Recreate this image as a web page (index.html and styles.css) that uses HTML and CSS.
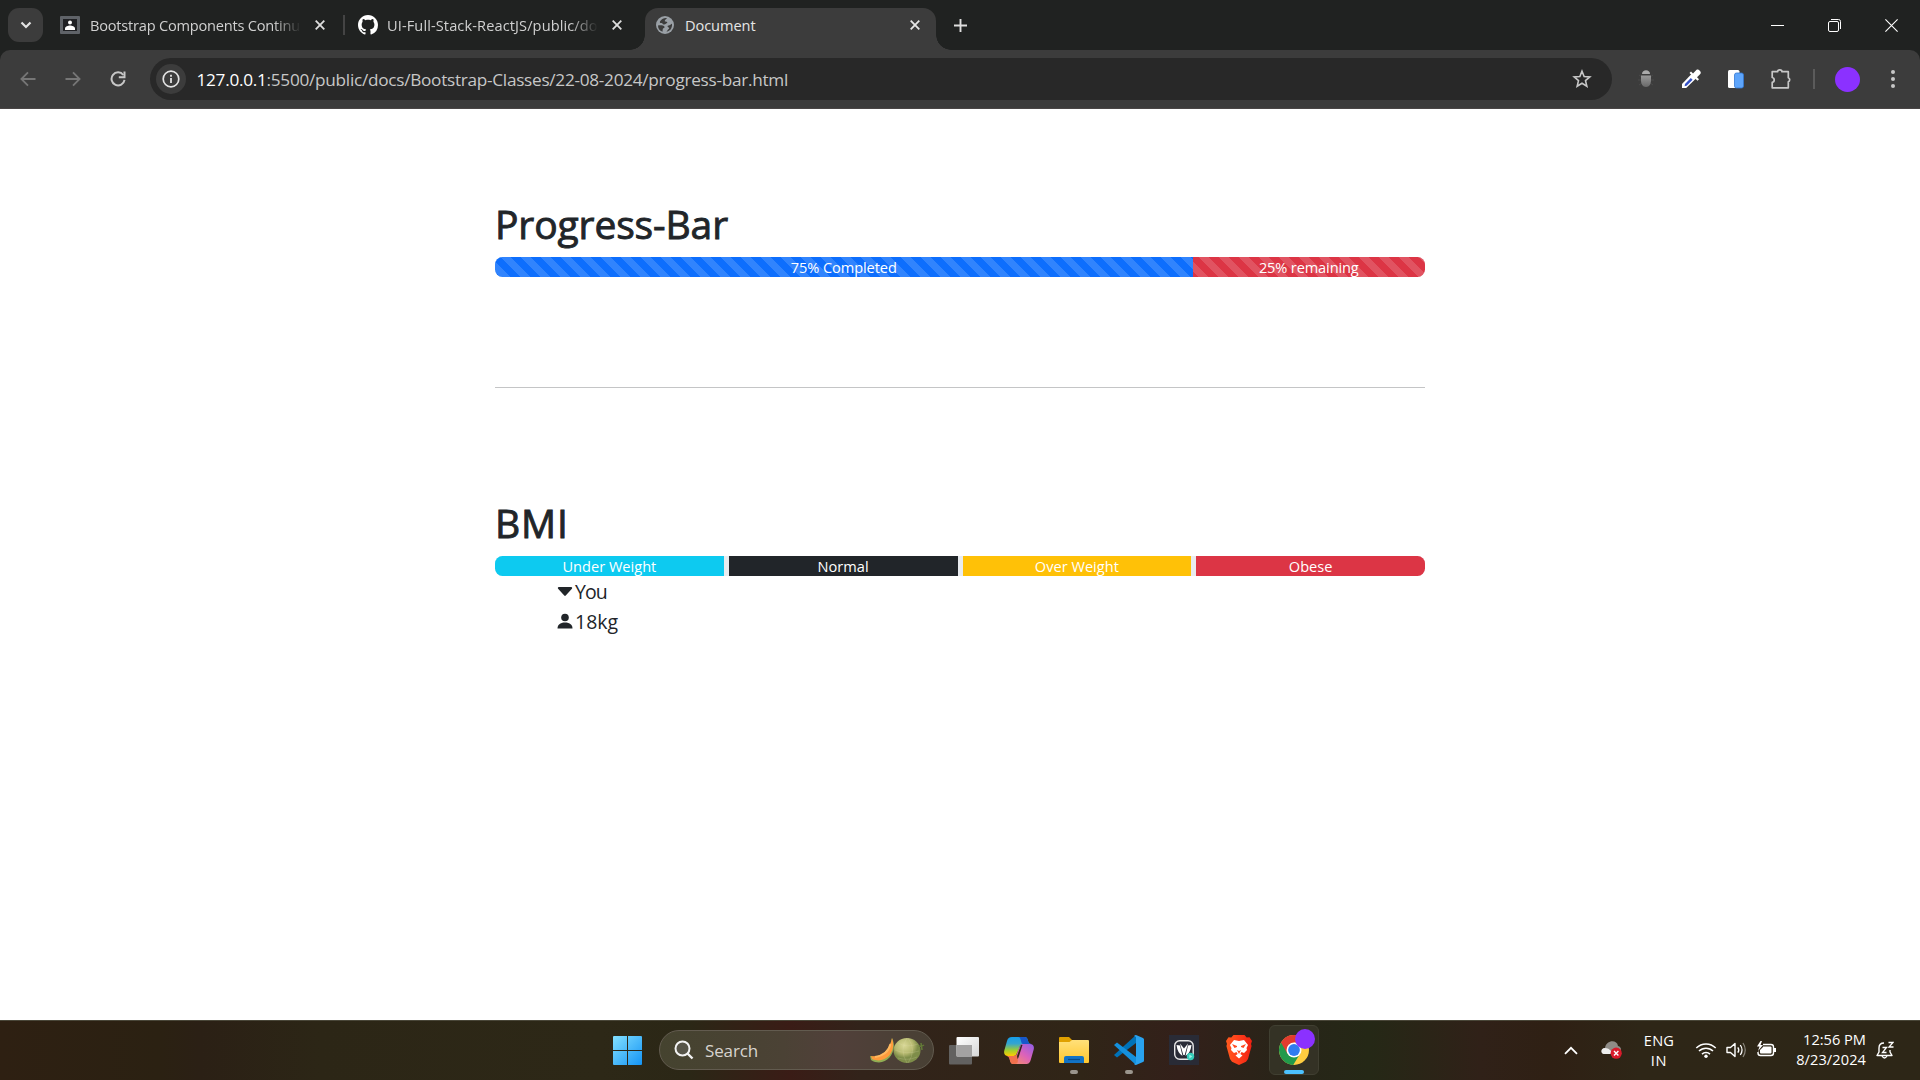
FILE: index.html
```html
<!DOCTYPE html>
<html lang="en">
<head>
<meta charset="utf-8">
<title>Document</title>
<link rel="stylesheet" href="styles.css">
</head>
<body>
<div class="screen">
  <header class="browser">
    <div class="tabstrip">
      <button class="tab-search"><svg width="12" height="8" viewBox="0 0 12 8"><path d="M1.5 1.5 6 6l4.500-4.500" fill="none" stroke="#e3e3e3" stroke-width="2.200"/></svg></button>
      <div class="tab tab-first">
        <svg class="favicon" width="20" height="18" viewBox="0 0 20 18"><rect width="20" height="18" rx="1" fill="#5f6368"/><rect x="3" y="3" width="14" height="12" fill="#202124"/><circle cx="10" cy="6.500" r="2" fill="#fff"/><path d="M5 14v-1.500C5 10.500 8 9.500 10 9.500s5 1 5 3V14z" fill="#fff"/></svg>
        <span class="tab-title faded"><span class="t-tab1">Bootstrap Components Continu</span></span>
        <svg class="tab-close" width="10" height="10" viewBox="0 0 10 10"><path d="m.7.7 8.600 8.600m0-8.600L.7 9.300" stroke="#dedede" stroke-width="1.800"/></svg>
      </div>
      <i class="tab-divider"></i>
      <div class="tab tab-second">
        <svg class="favicon" width="20" height="20" viewBox="0 0 16 16"><path fill="#fff" d="M8 0C3.580 0 0 3.580 0 8c0 3.540 2.290 6.530 5.470 7.590.4.070.55-.17.55-.38 0-.19-.01-.82-.01-1.490-2.010.37-2.530-.49-2.690-.94-.09-.23-.48-.94-.82-1.130-.28-.15-.68-.52-.01-.53.63-.01 1.080.58 1.230.82.72 1.210 1.870.87 2.330.66.070-.52.28-.87.51-1.070-1.780-.2-3.640-.89-3.640-3.950 0-.87.31-1.590.82-2.150-.08-.2-.36-1.020.08-2.120 0 0 .67-.21 2.200.82.64-.18 1.320-.27 2-.27s1.360.09 2 .27c1.530-1.040 2.200-.82 2.200-.82.44 1.100.16 1.920.08 2.120.51.56.82 1.270.82 2.150 0 3.070-1.870 3.750-3.650 3.950.29.25.54.73.54 1.480 0 1.070-.01 1.930-.01 2.200 0 .21.15.46.55.38A8.010 8.010 0 0 0 16 8c0-4.420-3.580-8-8-8"/></svg>
        <span class="tab-title faded"><span class="t-tab2">UI-Full-Stack-ReactJS/public/do</span></span>
        <svg class="tab-close" width="10" height="10" viewBox="0 0 10 10"><path d="m.7.7 8.600 8.600m0-8.600L.7 9.300" stroke="#dedede" stroke-width="1.800"/></svg>
      </div>
      <div class="tab tab-active">
        <svg class="favicon" width="18" height="18" viewBox="0 0 18 18"><circle cx="9" cy="9" r="9" fill="#9aa0a6"/><path d="M11 2.300c-1.800-.8-5 .4-6.700 2.600-.9 1.300-.4 2.200 1 2.100 1.500-.2 1.200 1.700 2.700 1.500 1.800-.3 2-1.500 3.300-1.500.2-1.500-1.300-1.500-2.300-1.600-.7-.3.300-2 2-3.100M2 9.500c2.500-.4 5.500-.2 6.500 1.300.6 1.400-1.700 1.300-1.800 2.600l-.2 2.300C3.600 15 2 12.500 2 9.500m14-1.800c-.9.200-1.500 1.500-2.600 1.500-1.300.1-2.200.5-1.700 1.500.5.900 1.600.3 1.500 1.500-.1 1-1.300 1-1.700 2-.3.700-.6 1.200-1.300 1.600 3.500-.3 6.300-3.600 5.800-8.100" fill="#3c3c3c"/></svg>
        <span class="tab-title"><span class="t-tab3">Document</span></span>
        <svg class="tab-close" width="10" height="10" viewBox="0 0 10 10"><path d="m.7.7 8.600 8.600m0-8.600L.7 9.300" stroke="#e6e6e6" stroke-width="1.800"/></svg>
      </div>
      <svg class="new-tab" width="13" height="13" viewBox="0 0 13 13"><path d="M6.500 0v13M0 6.500h13" stroke="#dedede" stroke-width="1.900"/></svg>
      <div class="window-buttons">
        <svg width="13" height="13" viewBox="0 0 13 13"><path d="M0 6.500h13" stroke="#fff"/></svg>
        <svg width="13" height="13" viewBox="0 0 13 13"><rect x=".5" y="2.500" width="10" height="10" rx="1.500" fill="none" stroke="#fff"/><path d="M3 .5h7.500a2 2 0 0 1 2 2V10" fill="none" stroke="#fff"/></svg>
        <svg width="13" height="13" viewBox="0 0 13 13"><path d="m.4.400 12.200 12.200m0-12.200L.4 12.600" stroke="#fff" stroke-width="1.100"/></svg>
      </div>
    </div>
    <div class="toolbar">
      <nav class="nav-buttons">
        <svg width="16" height="16" viewBox="0 0 16 16"><path d="M15.500 8H1.500M8 1.300 1.400 8 8 14.700" fill="none" stroke="#767676" stroke-width="1.800"/></svg>
        <svg width="16" height="16" viewBox="0 0 16 16"><path d="M.5 8h14M8 1.300 14.600 8 8 14.700" fill="none" stroke="#767676" stroke-width="1.800"/></svg>
        <svg width="16" height="16" viewBox="0 0 16 16"><path d="M13.300 4A6.500 6.500 0 1 0 14.500 8.800" fill="none" stroke="#c7c7c7" stroke-width="2"/><path d="M14.500.5v5.700H8.800" fill="none" stroke="#c7c7c7" stroke-width="2"/></svg>
      </nav>
      <div class="omnibox">
        <span class="site-info"><svg width="18" height="18" viewBox="0 0 18 18"><circle cx="9" cy="9" r="7.800" fill="none" stroke="#e3e3e3" stroke-width="1.700"/><path d="M9 8v5M9 4.800v1.900" stroke="#e3e3e3" stroke-width="1.800"/></svg></span>
        <span class="url"><b>127.0.0.1</b>:5500/public/docs/Bootstrap-Classes/22-08-2024/progress-bar.html</span>
        <svg class="star" width="20" height="20" viewBox="0 0 20 20"><path d="m10 2.200 2.150 5.300 5.700.45-4.350 3.700 1.350 5.600L10 14.200l-4.850 3.050 1.350-5.600-4.350-3.700 5.700-.45z" fill="none" stroke="#c7c7c7" stroke-width="1.600"/></svg>
      </div>
      <div class="extensions">
        <svg width="20" height="20" viewBox="0 0 20 20"><defs><linearGradient id="bug" x2="0" y2="1"><stop stop-color="#999"/><stop offset="1" stop-color="#686868"/></linearGradient></defs><path d="M3 6l3 2m11-2-3 2M2 11h3m13 0h-3M3 16l3-2m11 2-3-2" stroke="#4a4a4a"/><path d="M6 5c0-5 8-5 8 0z" fill="#aaa"/><path d="M5 6.500h10V11c0 4-1.500 7-5 7s-5-3-5-7z" fill="url(#bug)"/></svg>
        <svg width="22" height="22" viewBox="0 0 22 22"><path d="m11.500 6 4.500 4.500-9.800 9.600H2v-4.200z" fill="#fff"/><path d="m10.800 10 1.800 1.700-6 6-2 .5.400-2.200z" fill="#3452c8"/><path d="m9.500 5 8 7.800 1.500-1.500-2-2.100 3.500-3.500c1.300-1.700-2-5-3.900-3.900L13 5.400l-2-1.900z" fill="#fff"/></svg>
        <svg width="18" height="20" viewBox="0 0 18 20"><rect x="1" y="1" width="11.500" height="18" rx="1.500" fill="#fff"/><rect x="7.500" y="4" width="9" height="15" rx="2" fill="#5ea5fb" stroke="#3478d4" stroke-width=".8"/></svg>
        <svg width="22" height="22" viewBox="0 0 22 22"><path d="M2.200 3.700h5.400a2.200 1.900 0 0 1 4.400 0h6.300v6a2 2.200 0 0 1 0 4.200v5.900H2.200v-5.400a2.500 2.500 0 0 0 0-4.900z" fill="none" stroke="#c7c7c7" stroke-width="1.700" stroke-linejoin="round"/></svg>
      </div>
      <i class="toolbar-divider"></i>
      <span class="avatar"></span>
      <svg class="menu" width="4" height="18" viewBox="0 0 4 18"><g fill="#c7c7c7"><circle cx="2" cy="2" r="2"/><circle cx="2" cy="9" r="2"/><circle cx="2" cy="16" r="2"/></g></svg>
    </div>
  </header>

  <main class="page">
    <section class="completion">
      <h1 class="t-h1">Progress-Bar</h1>
      <div class="progress">
        <div class="bar striped primary" style="width:75%"><span class="t-75">75% Completed</span></div>
        <div class="bar striped danger" style="width:25%"><span class="t-25">25% remaining</span></div>
      </div>
    </section>
    <hr>
    <section>
      <h1 class="t-bmi">BMI</h1>
      <div class="progress bmi">
        <div class="bar info"><span>Under Weight</span></div>
        <div class="bar dark"><span>Normal</span></div>
        <div class="bar warning"><span>Over Weight</span></div>
        <div class="bar danger"><span>Obese</span></div>
      </div>
      <div class="reading"><svg width="16" height="16" viewBox="0 0 16 16"><path fill="#212529" d="M7.250 12.600 1.100 5.700C.5 5 1 4 1.800 4h12.400c.8 0 1.300 1 .7 1.700l-6.150 6.900a1 1 0 0 1-1.500 0"/></svg><span class="t-you">You</span></div>
      <div class="reading"><svg width="16" height="16" viewBox="0 0 16 16"><path fill="#212529" d="M.5 15.500c0-3.500 2.500-6 7.500-6s7.500 2.500 7.500 6z"/><circle cx="8" cy="4.500" r="3.800" fill="#212529"/></svg><span>18kg</span></div>
    </section>
  </main>

  <footer class="taskbar">
    <div class="slot start"><svg width="29" height="29" viewBox="0 0 29 29"><defs><linearGradient id="win" x1="0" y1="0" x2="1" y2="1" ><stop stop-color="#83e0ff"/><stop offset="1" stop-color="#1494f5"/></linearGradient></defs><path fill="url(#win)" d="M1 0h13v14H0V1q0-1 1-1m14 0h13q1 0 1 1v13H15zM0 15h14v14H1q-1 0-1-1zm15 0h14v13q0 1-1 1H15z"/></svg></div>
    <div class="search">
      <svg width="20" height="20" viewBox="0 0 20 20"><circle cx="8.500" cy="8.500" r="7" fill="#777" fill-opacity=".35" stroke="#f3f3f3" stroke-width="2"/><path d="m13.500 13.500 5 5" stroke="#f3f3f3" stroke-width="2.400"/></svg>
      <span class="t-search">Search</span>
      <svg class="melon" width="55" height="27" viewBox="0 0 55 27"><defs><radialGradient id="mel" cx=".4" cy=".3"><stop stop-color="#d9d896"/><stop offset=".65" stop-color="#b6b970"/><stop offset="1" stop-color="#7e8d49"/></radialGradient></defs><ellipse cx="37" cy="13.500" rx="13.500" ry="12.500" fill="url(#mel)"/><path d="M28 6q9 5 20 1M25 13q12 5 24 1M28 21q10 3 19-1M37 1q-8 12 0 25M38 1q9 12 0 25" fill="none" stroke="#e0deb0" stroke-opacity=".25" stroke-width=".8"/><path d="M49 9q2 1 5-1M51 6l1 7" fill="none" stroke="#637b37" stroke-width="1.500"/><path d="M22 1c7 14-7 31-21 22l-1-4C12 22 20 12 22 1" fill="#90ad54"/><path d="M22 1c5 13-6 27-20 21l-1-3C13 21 20 12 22 1" fill="#ff9b3c"/><path d="M20.500 7Q18 18 5 20" fill="none" stroke="#ffb85f" stroke-width="2"/></svg>
    </div>
    <div class="apps">
      <div class="slot"><svg width="30" height="29" viewBox="0 0 30 29"><defs><linearGradient id="tv" x2="1" y2="1"><stop stop-color="#fff"/><stop offset="1" stop-color="#d6d6d6"/></linearGradient></defs><rect y="9" width="23" height="19.500" rx="1" fill="#626160"/><rect x="7.500" y="1" width="22.500" height="19.500" rx="1" fill="url(#tv)"/><path d="M7.500 9H23v11.500H7.500z" fill="#a3a2a2"/></svg></div>
      <div class="slot"><svg width="30" height="29" viewBox="0 0 30 29"><defs><linearGradient id="cp1" x2="0" y2="1"><stop stop-color="#159eea"/><stop offset=".35" stop-color="#35a4d0"/><stop offset=".7" stop-color="#a1ce2e"/><stop offset="1" stop-color="#ffcb00"/></linearGradient><linearGradient id="cp2" x1="1" y1="0" x2="0" y2="1"><stop stop-color="#8e5ee7"/><stop offset=".45" stop-color="#dc62ba"/><stop offset="1" stop-color="#ff9d52"/></linearGradient></defs><path d="M20 1c3 0 3.500 1.500 4.200 4.300.4 1.700 1 2.700 3 2.700h-8.500c-2 0-2.800 1.800-3.700 5L12.500 18C11.600 20 10.500 20 8 20H4c-3 0-4.500-2-3.700-5.500L3 5C4 2 5 1 8 1z" fill="url(#cp1)"/><path d="M17 1h3c3 0 3.500 1.500 4.200 4.300.4 1.700 1 2.700 3 2.700h-8c-3 0-1.400-7-5.200-7" fill="#1857ca"/><path d="M10 28c-3 0-3.500-1.500-4.200-4.300C5.400 22 5 20.500 3 20h6c3 0 3.700-1 4.500-4L16 10c1-2 2-2 4-2h6c3 0 4.500 2 3.700 5.500L27 23c-1 4-2.500 5-5 5z" fill="url(#cp2)"/><path d="M3 20h6c1.500 0 3-.5 3.700-1.500l1 4.500c.5 3 0 5-3.700 5-3 0-3.500-1.500-4.200-4.300C5.400 22 5 20.500 3 20" fill="#f0704d"/><path d="m13 20 4-11h1.500L15 20c-.5 1.700-1 2.500-1.500 3z" fill="#31261b"/></svg></div>
      <div class="slot running"><svg width="30" height="28" viewBox="0 0 30 28"><defs><linearGradient id="fo" x2="0" y2="1"><stop stop-color="#ffe07a"/><stop offset="1" stop-color="#ffc72e"/></linearGradient></defs><path d="M0 2q0-1 1-1h9l3 3v4H0z" fill="#e0a000"/><path d="M0 6h10.500l2.500-2h16q1 0 1 1v21q0 1-1 1H1q-1 0-1-1z" fill="url(#fo)"/><path d="M5 27v-5q0-2 2-2h16q2 0 2 2v5z" fill="#1273c5"/><path d="M9 23.500h12" stroke="#064c8b" stroke-width="1.200"/></svg></div>
      <div class="slot running"><svg width="30" height="30" viewBox="0 0 30 30"><path d="M0 20 22 0v8L3 22.500z" fill="#0072b8"/><path d="M0 10 3 7.500 22 22v8z" fill="#1590dd"/><path d="m22 0 7 3q1 .5 1 1.500v21q0 1-1 1.500l-7 3q-1 0-2-1l2-1V2l-2-1q1-1 2-1" fill="#29a2ef"/></svg></div>
      <div class="slot"><svg width="30" height="30" viewBox="0 0 30 30"><path d="M0 0h30v30H0z" fill="#292b36"/><rect x="5.700" y="5.700" width="18.500" height="18.500" rx="5" fill="none" stroke="#e7e7e7" stroke-width="1.400"/><path d="m7.500 10 3.500.5L13.500 21q-5-3-6-11M22.500 10l-3.500.5L16.500 21q5-3 6-11M11 8.500 14.300 20h1.400L19 8.500l-4 5z" fill="#fff"/><circle cx="21.500" cy="21.500" r="3.700" fill="#35cdbb"/><path d="m20.300 19.500 3 2-3 2z" fill="#9bf3e6"/></svg></div>
      <div class="slot"><svg width="26" height="30" viewBox="0 0 26 30"><defs><linearGradient id="br"><stop stop-color="#ff5a1d"/><stop offset=".45" stop-color="#ff401b"/><stop offset="1" stop-color="#f02012"/></linearGradient></defs><path d="M7.500 0h11l2.200 2.500 2.800-.2L26 6l-1 3 .6 2-3.600 13-2 2.700L13 30l-7-3.300L4 24 .4 11 1 9 0 6l2.500-3.700 2.800.2z" fill="url(#br)"/><path d="m8 5 5 1 5-1 4 5-1.500 3 .5 2-3 3-2.500-1-1.200 2 2.200 1.500-3.500 3-3.500-3 2.200-1.500-1.200-2L8 18l-3-3 .5-2L4 10z" fill="#fff"/><path d="m6 9 5 2v1L8.500 13zm14 0-5 2v1l2.500 1zM11 15l2 1 2-1-2 4z" fill="#ff4a20"/></svg></div>
      <div class="slot current"><div class="current-tile"><svg width="30" height="30" viewBox="0 0 30 30"><circle cx="15" cy="15" r="15" fill="#ffcd40"/><path d="M15 15 2 7.500a15 15 0 0 0 12.200 22.480L21.500 18z" fill="#219a4b"/><path d="M15 7.500h13A15 15 0 0 0 2 7.500l6.500 11.300z" fill="#e23b2e"/><circle cx="15" cy="15" r="7.500" fill="#fff"/><circle cx="15" cy="15" r="5.900" fill="#2f7cf0"/></svg><i class="profile-dot"></i></div></div>
    </div>
    <div class="tray">
      <svg class="chevron" width="14" height="9" viewBox="0 0 14 9"><path d="m1 7.800 6-6 6 6" fill="none" stroke="#fff" stroke-width="1.800"/></svg>
      <svg class="cloud" width="21" height="18" viewBox="0 0 21 18"><path d="M3 13c-4-1-3-6 1-6 1-8 12-9 13-2 5 1 3 8 0 8z" fill="#8f8c87"/><path d="M3 13c-4-1-3-6 1-6 4 0 6 3 9 6z" fill="#ededed"/><circle cx="15.200" cy="12.200" r="5.600" fill="#d91b2b"/><path d="m13 10 4.400 4.400m0-4.400L13 14.400" stroke="#fff" stroke-width="1.400"/></svg>
      <div class="language"><span class="t-eng">ENG</span><span class="t-in">IN</span></div>
      <div class="status">
        <svg width="22" height="18" viewBox="0 0 22 18"><g fill="none" stroke="#fff" stroke-width="1.500"><path d="M1.300 7a13.600 13.600 0 0 1 19.400 0M4 10.100a9.800 9.800 0 0 1 14 0M7 13.100a5.700 5.700 0 0 1 8 0"/></g><circle cx="11" cy="15.300" r="1.700" fill="#fff"/></svg>
        <svg width="21" height="18" viewBox="0 0 21 18"><path d="M1 6.500h3.500L9 2.500v13l-4.500-4H1z" fill="none" stroke="#fff" stroke-width="1.400" stroke-linejoin="round"/><path d="M11.800 6.300q2 2.700 0 5.400M14.300 4q3.500 5 0 10" fill="none" stroke="#fff" stroke-width="1.300"/><path d="M17 2q4.500 7 0 14" fill="none" stroke="#8b867c" stroke-width="1.200"/></svg>
        <svg width="21" height="18" viewBox="0 0 21 18"><rect x="2" y="3.500" width="15.500" height="11" rx="2.500" fill="none" stroke="#fff" stroke-width="1.400"/><rect x="4" y="5.500" width="11.500" height="7" rx="1" fill="#fff"/><path d="M19 7v4" stroke="#fff" stroke-width="2"/><path d="M0 0h7v6L2 11H0z" fill="#2e2517"/><path d="M4.500 0 1 5.500h2.500L2 10l5-6H4.500L6 0z" fill="#fff"/></svg>
      </div>
      <div class="clock"><span>12:56 PM</span><span class="t-date">8/23/2024</span></div>
      <svg class="bell" width="18" height="19" viewBox="0 0 18 19"><path d="M8 2C5 2 3 4 3 7v4l-2 3.500h15L14 11V9" fill="none" stroke="#fff" stroke-width="1.400" stroke-linejoin="round"/><path d="M6 15q2.500 4 5 0M6.500 6.500h4l-4 5h4M12.500 1.500H17l-4 4.500h4.500" fill="none" stroke="#fff" stroke-width="1.300"/></svg>
    </div>
  </footer>
</div>
</body>
</html>
```
FILE: styles.css
```css
* { box-sizing: border-box; }
body { margin: 0; font-family: "Open Sans", "Noto Sans", sans-serif; background: #fff; }
svg { display: block; flex: none; }
span { white-space: nowrap; }
.screen { width: 1920px; height: 1080px; display: flex; flex-direction: column; overflow: hidden; }

.browser { height: 109px; background: #202221; }
.tabstrip { height: 50px; display: flex; align-items: center; padding-left: 8px; color: #d0d0d0; font-size: 14.600px; }
.tab-search { width: 35px; height: 34px; border: 0; border-radius: 11px; background: #3c3c3c; display: grid; place-items: center; padding: 0; }
.tab { height: 42px; display: flex; align-items: center; flex: none; }
.tab-title { flex: 1; overflow: hidden; margin-left: 10px; }
.faded { flex: none; width: 211px; -webkit-mask-image: linear-gradient(90deg, #000 87%, transparent); mask-image: linear-gradient(90deg, #000 87%, transparent); }
.tab-close { margin-left: 14px; }
.tab-first { margin-left: 17px; width: 283px; }
.t-tab1 { letter-spacing: -.217px; }
.t-tab2 { letter-spacing: .1px; }
.t-tab3 { letter-spacing: -.08px; }
.tab-divider { width: 2px; height: 20px; background: #444; }
.tab-second { width: 287px; padding-left: 13px; }
.tab-second .tab-title { margin-left: 9px; }
.tab-active { align-self: flex-end; height: 42.500px; width: 290.500px; margin-left: 13px; padding: 0 15.500px 7.500px 11px; background: #3c3c3c; border-radius: 13px 13px 0 0; color: #e6e6e6; position: relative; }
.tab-active .tab-title { margin-left: 11px; }
.tab-active::before, .tab-active::after { content: ""; position: absolute; bottom: 0; width: 15px; height: 15px; }
.tab-active::before { right: 100%; background: radial-gradient(circle at 0 0, transparent 14.500px, #3c3c3c 15px); }
.tab-active::after { left: 100%; background: radial-gradient(circle at 100% 0, transparent 14.500px, #3c3c3c 15px); }
.new-tab { margin-left: 18.500px; }
.window-buttons { margin-left: auto; display: flex; padding-right: 22px; gap: 44px; }

.toolbar { height: 59px; background: #3c3c3c; border-bottom: 1px solid #4a4646; border-radius: 10px 10px 0 0; display: flex; align-items: center; }
.nav-buttons { display: flex; gap: 29px; margin-left: 20px; width: 130px; }
.omnibox { width: 1462px; height: 42px; border-radius: 21px; background: #282828; display: flex; align-items: center; padding: 0 20px 0 6px; }
.site-info { width: 30px; height: 30px; border-radius: 50%; background: #3c3c3c; display: grid; place-items: center; }
.url { margin-left: 10.500px; font-size: 17.200px; letter-spacing: -.272px; color: #c7c7c7; }
.url b { font-weight: 400; color: #fff; }
.star { margin-left: auto; }
.extensions { display: grid; grid-template-columns: repeat(4, 45px); justify-items: center; align-items: center; margin-left: 11px; }
.toolbar-divider { width: 2px; height: 20px; background: #5b5b5b; margin-left: 10px; }
.avatar { width: 25px; height: 25px; border-radius: 50%; background: #8b31ff; margin-left: 20px; }
.menu { margin-left: 31px; }

.page { height: 911px; width: 930px; margin: 0 auto; padding-top: 92px; color: #212529; }
h1 { margin: 0 0 10px; font-size: 39px; line-height: 46px; font-weight: 400; -webkit-text-stroke: .9px #212529; white-space: nowrap; }
.t-h1 { letter-spacing: -.12px; }
.t-bmi { letter-spacing: .9px; }
.progress { height: 20px; display: flex; border-radius: 7.500px; overflow: hidden; background: #e9ecef; font-size: 14.600px; line-height: 20px; color: #fff; }
.t-75 { letter-spacing: -.08px; }
.t-25 { letter-spacing: -.14px; }
.bmi { gap: 5px; }
.bmi .bar { flex: 1; }
.bar { display: flex; justify-content: center; }
.primary { background-color: #0d6efd; }
.danger { background-color: #dc3545; }
.info { background-color: #0dcaf0; }
.dark { background-color: #212529; }
.warning { background-color: #ffc107; }
.striped { background-image: linear-gradient(45deg, rgba(255,255,255,.15) 25%, transparent 25%, transparent 50%, rgba(255,255,255,.15) 50%, rgba(255,255,255,.15) 75%, transparent 75%, transparent); background-size: 20px 20px; background-position-x: 6px; }
hr { margin: 110px 0 112px; border: 0; height: 1px; background: #c4c5c6; }
.reading { height: 30px; padding-left: 62px; display: flex; align-items: center; gap: 2px; font-size: 19.500px; }
.t-you { letter-spacing: -.9px; }

.taskbar { height: 60px; padding: 0 0 1px 600px; border-top: 1px solid #494638; display: flex; align-items: center; color: #fff; background: linear-gradient(90deg, #2e2012 0, #2b2112 160px, #2b2015 200px, #2c2616 320px, #2d2817 600px, #2b2716 690px, #3a1c16 790px, #32231a 860px, #302517 1080px, #33201a 1180px, #272518 1300px, #252816 1370px, #302118 1480px, #2f2014 1550px, #2e2617 1640px, #2d2617 1920px); }
.slot { width: 55px; height: 58px; display: grid; place-items: center; position: relative; }
.search { width: 275px; height: 40px; margin: 0 2.500px 0 4px; border-radius: 20px; border: 1px solid #625b4f; background: linear-gradient(90deg, #45432f, #4b4235 45%, #51403a 65%, #484034); display: flex; align-items: center; padding: 0 8px 0 14px; font-size: 17px; color: #d8d4cf; }
.search .t-search { margin-left: 11px; letter-spacing: -.14px; }
.melon { margin-left: auto; }
.apps { display: flex; }
.running::after, .current::after { content: ""; position: absolute; left: 23.500px; bottom: 5px; width: 8px; height: 4px; border-radius: 2px; background: #9b958d; }
.current::after { left: 17.500px; width: 20px; background: #4cc2ff; }
.current-tile { width: 50px; height: 50px; border: 1px solid #403f31; border-radius: 6px; background: #343225; display: grid; place-items: center; position: relative; }
.profile-dot { position: absolute; left: 25px; top: 3px; width: 20px; height: 20px; border-radius: 50%; background: #8b31ff; }
.tray { margin-left: auto; display: flex; align-items: center; padding-right: 26px; font-size: 14.600px; line-height: 20px; }
.cloud { margin-left: 23px; }
.language { margin-left: 22px; width: 30px; padding-bottom: 1px; display: flex; flex-direction: column; align-items: center; }
.t-eng { letter-spacing: .2px; }
.t-in { letter-spacing: .7px; }
.status { display: flex; gap: 9px; margin-left: 21px; }
.clock { width: 70px; margin-left: 19px; padding-bottom: 2px; display: flex; flex-direction: column; align-items: flex-end; }
.t-date { letter-spacing: .08px; }
.bell { margin-left: 10px; }
```
